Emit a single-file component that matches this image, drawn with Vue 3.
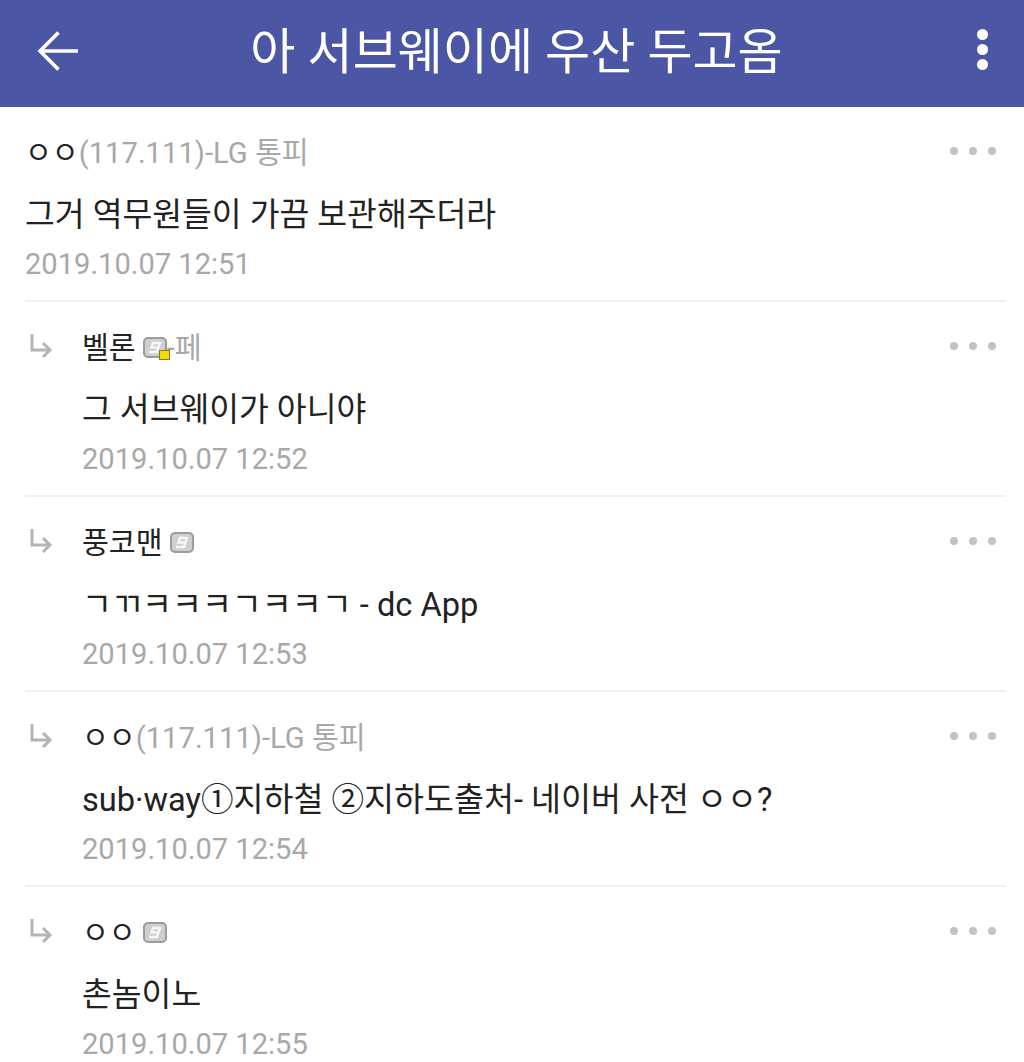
<script setup>
const comments = [
  { name: "ㅇㅇ", ip: "(117.111)-LG 통피", text: "그거 역무원들이 가끔 보관해주더라", date: "2019.10.07 12:51", reply: false },
  { name: "벨론", badge: "gold", ip: "-페", text: "그 서브웨이가 아니야", date: "2019.10.07 12:52", reply: true },
  { name: "풍코맨", badge: "gray", text: "ㄱㄲㅋㅋㅋㄱㅋㅋㄱ - dc App", date: "2019.10.07 12:53", reply: true, wide: true },
  { name: "ㅇㅇ", ip: "(117.111)-LG 통피", text: "sub·way①지하철 ②지하도출처- 네이버 사전 ㅇㅇ?", date: "2019.10.07 12:54", reply: true, wide: true },
  { name: "ㅇㅇ", badge: "gray", text: "촌놈이노", date: "2019.10.07 12:55", reply: true },
];
</script>

<template>
  <div class="page">
    <header class="topbar">
      <svg class="back" width="42" height="42" viewBox="0 0 42 42" fill="none" stroke="#fff" stroke-width="3.6">
        <path d="M3 21H41" />
        <path d="M21.5 2.5L3 21L21.5 39.5" />
      </svg>
      <h1 class="title">아 서브웨이에 우산 두고옴</h1>
      <div class="kebab"><i></i><i></i><i></i></div>
    </header>

    <div v-for="(c, i) in comments" :key="i" class="comment" :class="{ reply: c.reply }">
      <svg v-if="c.reply" class="arrow" width="22" height="24" viewBox="0 0 22 24" fill="none" stroke="#b4b4b4" stroke-width="3">
        <path d="M2 1V17H20" />
        <path d="M13 10L20 17L13 24" />
      </svg>
      <div class="head">
        <span class="name">{{ c.name }}</span>
        <span v-if="c.badge" class="badge">
          <svg width="24" height="21" viewBox="0 0 24 21">
            <rect x="1" y="1" width="22" height="19" rx="4" fill="#cfcfcf" stroke="#9c9c9c" stroke-width="2" />
            <path d="M6 15H14L17 6H10L8.5 10.5H15" fill="none" stroke="#f6f6f6" stroke-width="2.4" />
          </svg>
          <em v-if="c.badge === 'gold'" class="gold"></em>
        </span>
        <span v-if="c.ip" class="ip">{{ c.ip }}</span>
      </div>
      <div class="dots"><i></i><i></i><i></i></div>
      <p class="text" :class="{ wide: c.wide }">{{ c.text }}</p>
      <p class="date">{{ c.date }}</p>
    </div>
  </div>
</template>

<style scoped>
.page {
  width: 1024px;
  height: 1062px;
  overflow: hidden;
  background: #fff;
  font-family: Roboto, "Noto Sans CJK KR", sans-serif;
}

.topbar {
  height: 107px;
  box-sizing: border-box;
  background: #4b57a5;
  display: flex;
  align-items: center;
  padding: 0 36px 6px 37px;
}
.title {
  flex: 1;
  margin: 0;
  padding: 4px 23px 0 0;
  text-align: center;
  color: #fff;
  font-size: 49px;
  font-weight: 400;
  line-height: 60px;
}
.kebab {
  display: flex;
  flex-direction: column;
  gap: 4px;
  margin-top: -2px;
}
.kebab i {
  width: 11px;
  height: 11px;
  border-radius: 50%;
  background: #fff;
}

.comment {
  position: relative;
  height: 195px;
  box-sizing: border-box;
  margin: 0 18px 0 25px;
  padding-top: 23px;
  border-bottom: 2px solid #f0f0f0;
}
.comment.reply {
  padding-left: 57px;
}
.comment:last-child {
  border-bottom: 0;
}
.arrow {
  position: absolute;
  left: 5px;
  top: 31px;
  overflow: visible;
}

.head {
  display: flex;
  align-items: center;
  height: 40px;
  font-size: 29.2px;
}
.name {
  color: #222;
}
.ip {
  color: #a8a8a8;
}
.badge {
  position: relative;
  display: flex;
  margin: 4px 0 0 7px;
}
.gold {
  position: absolute;
  right: -3px;
  bottom: -2px;
  width: 9px;
  height: 8px;
  background: #f5d90a;
  border: 1px solid #8a7a10;
}

.dots {
  position: absolute;
  right: 10px;
  top: 40px;
  display: flex;
  gap: 11px;
}
.dots i {
  width: 8px;
  height: 8px;
  border-radius: 50%;
  background: #c2c2c2;
}

.text {
  margin: 24px 0 0;
  color: #222;
  font-size: 32.4px;
  line-height: 42px;
}
.text.wide {
  font-size: 32.6px;
}
.date {
  margin: 9px 0 0;
  color: #a8a8a8;
  font-size: 29.1px;
  line-height: 38px;
}
</style>
